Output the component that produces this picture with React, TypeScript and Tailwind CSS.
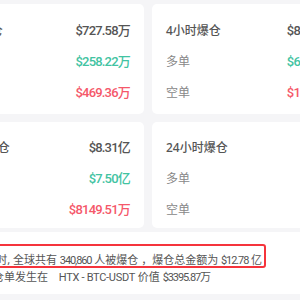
const cards = [
  {
    label: "1小时爆仓",
    total: "$727.58万",
    long: "$258.22万",
    short: "$469.36万",
  },
  {
    label: "4小时爆仓",
    total: "$8006.32万",
    long: "$6469.80万",
    short: "$1536.52万",
  },
  {
    label: "12小时爆仓",
    total: "$8.31亿",
    long: "$7.50亿",
    short: "$8149.51万",
  },
  {
    label: "24小时爆仓",
    total: "$12.78亿",
    long: "$10.34亿",
    short: "$2.44亿",
  },
];

const cjk = "font-['Noto_Sans','Noto_Sans_CJK_SC',sans-serif]";
const num = "font-['Roboto','Noto_Sans_CJK_SC',sans-serif]";

function Row({
  label,
  value,
  strong,
  color,
}: {
  label: string;
  value: string;
  strong?: boolean;
  color: string;
}) {
  return (
    <div className="flex h-[31px] items-center justify-between">
      <span
        className={`${cjk} text-[12px] ${strong ? "font-medium text-[#555]" : "text-[#888]"}`}
      >
        {label}
      </span>
      <span className={`${num} text-[13px] font-medium tracking-[-0.8px] ${color}`}>
        {value}
      </span>
    </div>
  );
}

// condensed latin runs inside the summary text
function N({ children }: { children: string }) {
  return (
    <span className="font-['Roboto',sans-serif] text-[11px] tracking-[-1.1px]">
      {children}
    </span>
  );
}

function L({ children }: { children: string }) {
  return (
    <span className="font-['Roboto',sans-serif] text-[11px] tracking-[-0.3px]">
      {children}
    </span>
  );
}

export default function App() {
  return (
    <div className="h-[300px] w-[300px] overflow-hidden bg-[#f5f5f7] pt-[4px]">
      <div className="ml-[-66px] w-[428px]">
        <div className="grid grid-cols-2 gap-[8px]">
          {cards.map((c, i) => (
            <div
              key={c.label}
              className={`rounded-[5px] bg-white px-[14px] ${i < 2 ? "pt-[11px] pb-[6px]" : "pt-[10px] pb-[3px]"}`}
            >
              <Row label={c.label} value={c.total} strong color="text-[#555]" />
              <Row label="多单" value={c.long} color="text-[#42c3a2]" />
              <Row label="空单" value={c.short} color="text-[#f5586a]" />
            </div>
          ))}
        </div>
        <div className="relative mt-[4px] h-[62px] w-[366px] bg-white pt-[20px]">
          <div className="pointer-events-none absolute left-[10px] top-[12px] h-[24px] w-[322px] rounded-[3px] border-2 border-[#f5343c]" />
          <p
            className={`${cjk} ml-[19px] whitespace-nowrap text-[11px] leading-[16px] text-[#555]`}
          >
            过去<N>24</N>小时, 全球共有 <N>340,860</N> 人被爆仓 ，爆仓总金额为 <N>$12.78</N> 亿
          </p>
          <p
            className={`${cjk} ml-[4px] whitespace-nowrap text-[11px] leading-[16px] text-[#555]`}
          >
            最大单笔爆仓单发生在 <span className="ml-[8px]" />
            <L>HTX - BTC-USDT</L> 价值 <N>$3395.87</N>万
          </p>
        </div>
      </div>
    </div>
  );
}
